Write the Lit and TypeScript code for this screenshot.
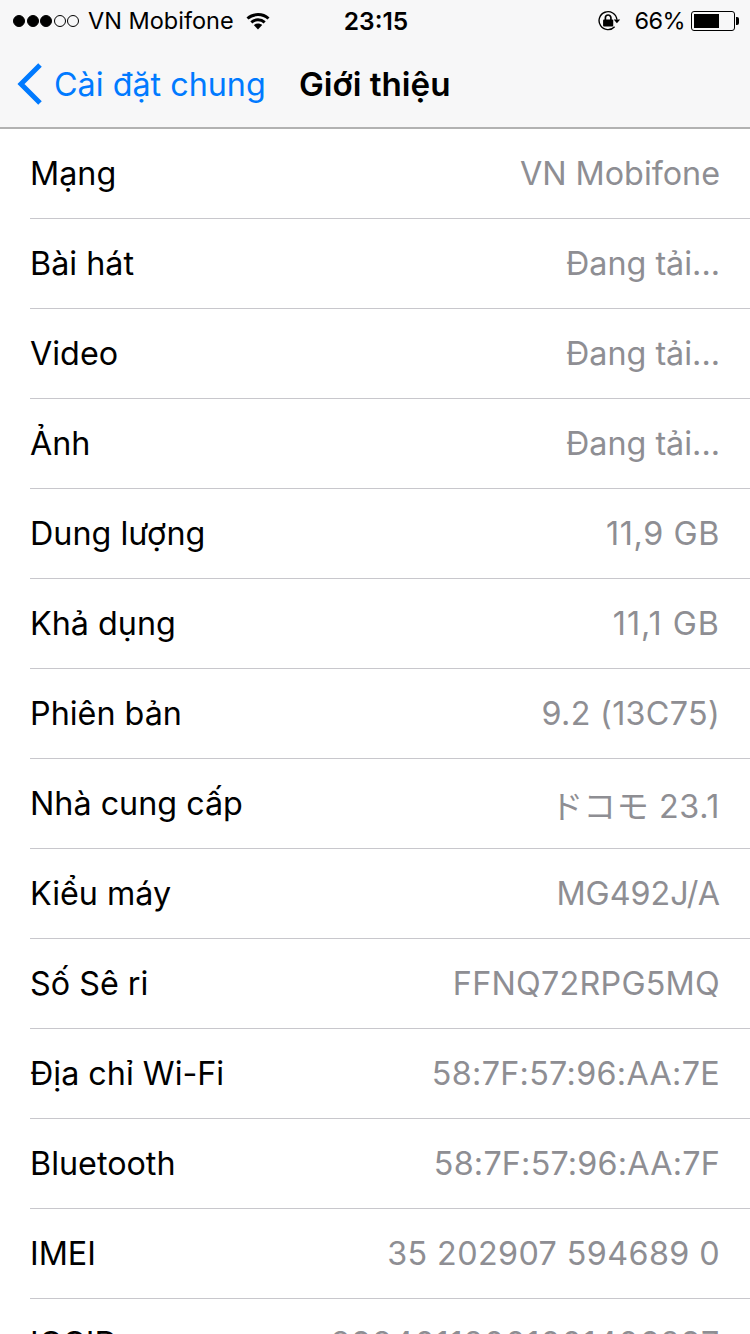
import { LitElement, html, css, svg } from "lit";
import { customElement } from "lit/decorators.js";

// label, value, tracking of the value in px
const rows: [string, string, number][] = [
  ["Mạng", "VN Mobifone", 0],
  ["Bài hát", "Đang tải...", 0],
  ["Video", "Đang tải...", 0],
  ["Ảnh", "Đang tải...", 0],
  ["Dung lượng", "11,9 GB", 0.6],
  ["Khả dụng", "11,1 GB", 1],
  ["Phiên bản", "9.2 (13C75)", 0.3],
  ["Nhà cung cấp", "ドコモ 23.1", 0.6],
  ["Kiểu máy", "MG492J/A", 0],
  ["Số Sê ri", "FFNQ72RPG5MQ", 0.25],
  ["Địa chỉ Wi-Fi", "58:7F:57:96:AA:7E", 0.3],
  ["Bluetooth", "58:7F:57:96:AA:7F", 0.2],
  ["IMEI", "35 202907 594689 0", 0.4],
  ["ICCID", "89840112001001406297", 0.8],
];

const wifi = svg`<svg width="24" height="18" viewBox="0 0 24 18">
  <path d="M1.500 6.500C7.300 1.200 16.700 1.200 22.500 6.500" fill="none" stroke="#000" stroke-width="3"/>
  <path d="M5.300 10.400c3.800-3.400 9.600-3.400 13.400 0" fill="none" stroke="#000" stroke-width="3"/>
  <path d="M7.800 13.100c2.400-2 6-2 8.400 0L12 17.500z" fill="#000"/>
</svg>`;

const lock = svg`<svg width="24" height="22" viewBox="0 0 26 22">
  <path d="M18 17.200A9.700 9.700 0 1 1 20.500 9.500" fill="none" stroke="#000" stroke-width="1.500"/>
  <path d="M17 9.500h7l-3.500 4z" fill="#000"/>
  <rect x="5.500" y="9.500" width="11" height="7.500" rx="1" fill="#000"/>
  <path d="M8 10V7.500a3 3 0 0 1 6 0V10" fill="none" stroke="#000" stroke-width="1.800"/>
</svg>`;

@customElement("app-root")
export class AppRoot extends LitElement {
  static styles = css`
    :host {
      display: block;
      width: 750px;
      height: 1334px;
      overflow: hidden;
      background: #fff;
      font-family: Inter, "Noto Sans CJK JP", sans-serif;
    }

    .head {
      background: #f7f7f8;
      border-bottom: 2px solid #b2b2b2;
      height: 129px;
      box-sizing: border-box;
    }

    .status {
      display: flex;
      align-items: center;
      height: 41px;
      padding: 0 11px 0 13px;
      font-size: 23.500px;
      color: #000;
    }

    .left,
    .right {
      flex: 1;
      display: flex;
      align-items: center;
    }

    .right {
      justify-content: flex-end;
    }

    .dots {
      display: flex;
      gap: 1.500px;
      margin-right: 9px;
    }

    .dot {
      width: 12px;
      height: 12px;
      box-sizing: border-box;
      border: 1.500px solid #000;
      border-radius: 50%;
    }

    .dot.on {
      background: #000;
    }

    .wifi {
      display: flex;
      margin-left: 12px;
    }

    .time {
      font-weight: 600;
      font-size: 24.500px;
    }

    .lock {
      display: flex;
      margin-right: 13px;
    }

    .percent {
      letter-spacing: -0.600px;
    }

    .battery {
      display: flex;
      align-items: center;
      margin-left: 6px;
    }

    .shell {
      width: 44px;
      height: 20px;
      box-sizing: border-box;
      border: 1px solid #000;
      border-radius: 3px;
      padding: 2px;
    }

    .level {
      width: 66%;
      height: 100%;
      background: #000;
    }

    .nub {
      width: 3px;
      height: 8px;
      background: #000;
      border-radius: 0 2px 2px 0;
      margin-left: 1px;
    }

    .bar {
      display: flex;
      align-items: center;
      height: 86px;
      padding-left: 15px;
    }

    .back {
      display: flex;
      margin-right: 11px;
    }

    .back-label {
      color: #007aff;
      font-size: 32.300px;
      width: 245px;
      white-space: nowrap;
    }

    .title {
      font-size: 33.200px;
      font-weight: 600;
      color: #000;
    }

    .row {
      height: 90px;
      margin-left: 30px;
      padding-right: 30px;
      box-sizing: border-box;
      display: flex;
      align-items: center;
      justify-content: space-between;
      border-bottom: 1px solid #c8c7cc;
      font-size: 32.300px;
      white-space: nowrap;
    }

    .name {
      color: #000;
    }

    .value {
      color: #8e8e93;
    }
  `;

  render() {
    return html`
      <div class="head">
        <div class="status">
          <div class="left">
            <div class="dots">
              ${[1, 1, 1, 0, 0].map(
                (on) => html`<span class="dot ${on ? "on" : ""}"></span>`
              )}
            </div>
            <span>VN Mobifone</span>
            <span class="wifi">${wifi}</span>
          </div>
          <div class="time">23:15</div>
          <div class="right">
            <span class="lock">${lock}</span>
            <span class="percent">66%</span>
            <span class="battery">
              <span class="shell"><div class="level"></div></span>
              <span class="nub"></span>
            </span>
          </div>
        </div>
        <div class="bar">
          <span class="back">
            <svg width="28" height="44" viewBox="0 0 28 44">
              <path d="M25 3 6 22l19 19" fill="none" stroke="#007aff" stroke-width="5"/>
            </svg>
          </span>
          <span class="back-label">Cài đặt chung</span>
          <span class="title">Giới thiệu</span>
        </div>
      </div>
      ${rows.map(
        ([name, value, tracking]) => html`
          <div class="row">
            <span class="name">${name}</span>
            <span class="value" style="letter-spacing: ${tracking}px">${value}</span>
          </div>
        `
      )}
    `;
  }
}
